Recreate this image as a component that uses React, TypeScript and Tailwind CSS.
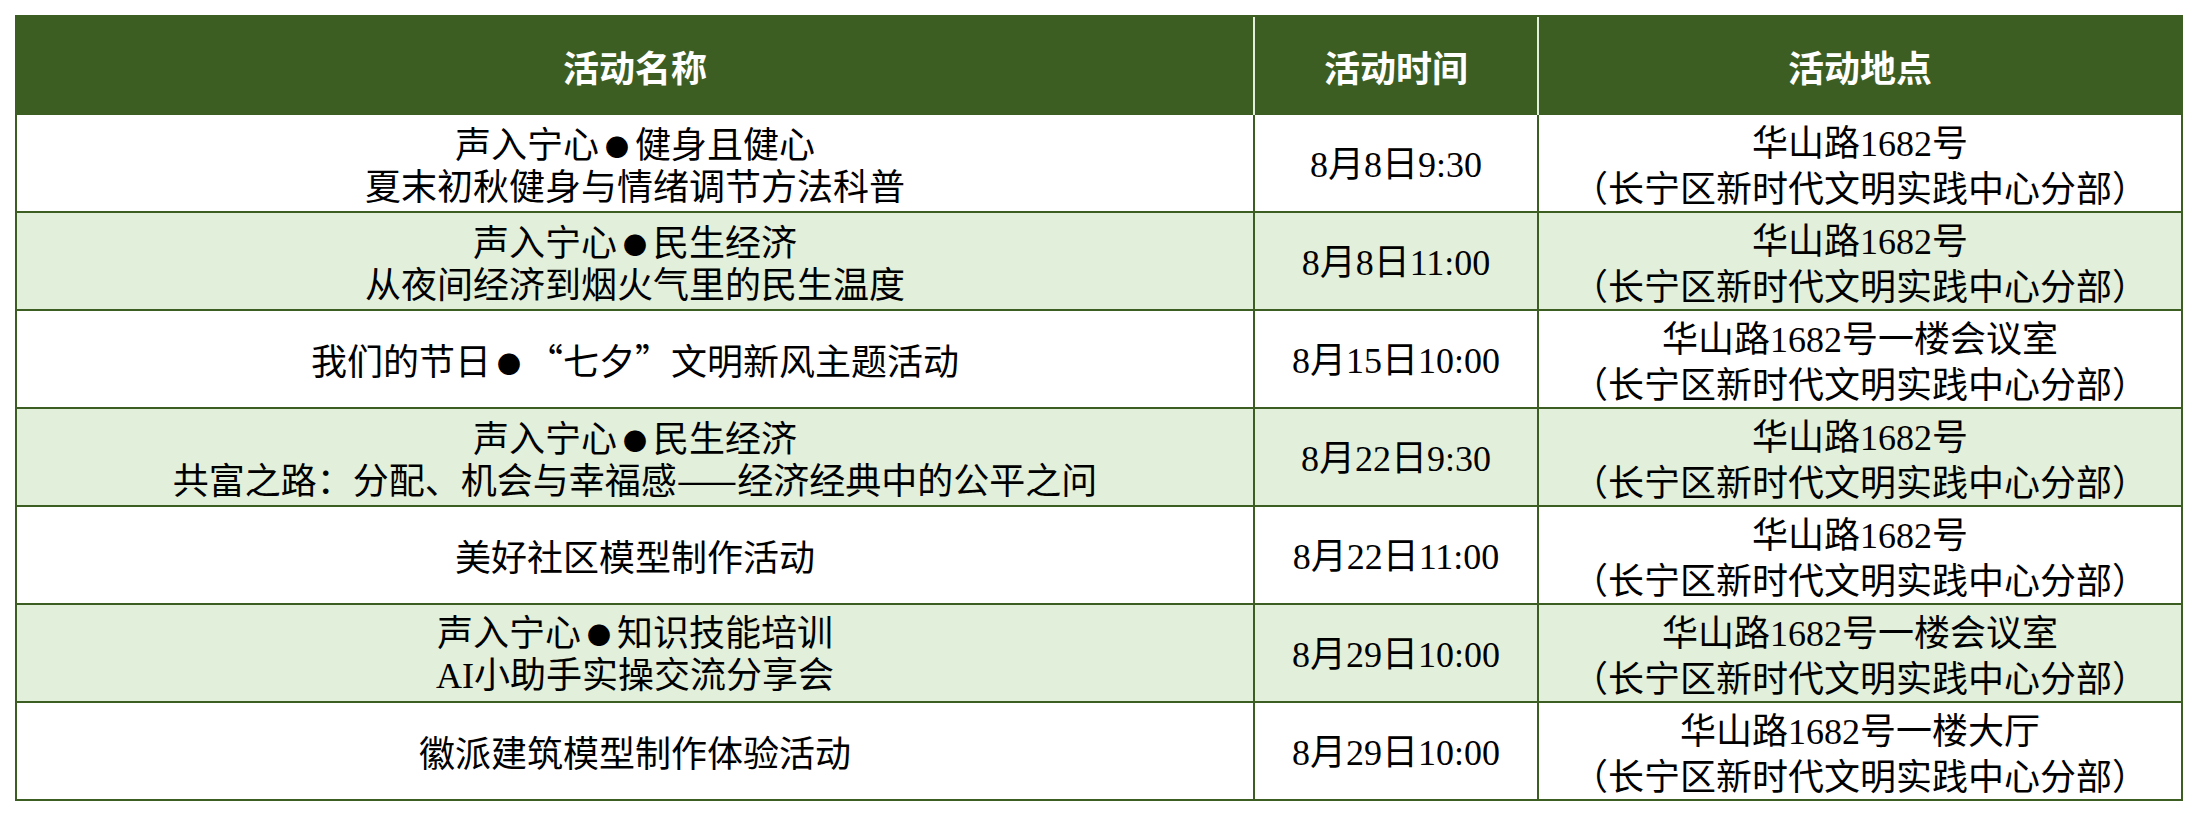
import React from 'react';

interface Activity {
  name: string[];
  time: string;
  place: string[];
}

const HQ = '（长宁区新时代文明实践中心分部）';

const activities: Activity[] = [
  { name: ['声入宁心●健身且健心', '夏末初秋健身与情绪调节方法科普'], time: '8月8日9:30', place: ['华山路1682号', HQ] },
  { name: ['声入宁心●民生经济', '从夜间经济到烟火气里的民生温度'], time: '8月8日11:00', place: ['华山路1682号', HQ] },
  { name: ['我们的节日●“七夕”文明新风主题活动'], time: '8月15日10:00', place: ['华山路1682号一楼会议室', HQ] },
  { name: ['声入宁心●民生经济', '共富之路：分配、机会与幸福感——经济经典中的公平之问'], time: '8月22日9:30', place: ['华山路1682号', HQ] },
  { name: ['美好社区模型制作活动'], time: '8月22日11:00', place: ['华山路1682号', HQ] },
  { name: ['声入宁心●知识技能培训', 'AI小助手实操交流分享会'], time: '8月29日10:00', place: ['华山路1682号一楼会议室', HQ] },
  { name: ['徽派建筑模型制作体验活动'], time: '8月29日10:00', place: ['华山路1682号一楼大厅', HQ] },
];

// latin letters and digits come out in a narrow serif, the bullet smaller, the rest in the CJK face
const Mixed: React.FC<{ text: string }> = ({ text }) => {
  const parts = text.split(/([0-9A-Za-z:]+|●)/).filter((p) => p !== '');
  return (
    <>
      {parts.map((p, i) => {
        if (p === '●')
          return (
            <span key={i} className="inline-block w-[36px] text-center text-[24px] leading-[24px] align-[2px]">
              ●
            </span>
          );
        if (/^[0-9A-Za-z:]+$/.test(p))
          return (
            <span key={i} className="font-['Liberation_Serif',serif]">
              {p}
            </span>
          );
        return <span key={i}>{p}</span>;
      })}
    </>
  );
};

const Lines: React.FC<{ lines: string[] }> = ({ lines }) => (
  <div className="flex flex-col items-center">
    {lines.map((l, i) => (
      <div key={i} className="whitespace-nowrap">
        <Mixed text={l} />
      </div>
    ))}
  </div>
);

export default function App() {
  return (
    <div className="bg-white w-[2198px] h-[816px] pt-[15px] pl-[15px] font-['Noto_Sans_CJK_SC',sans-serif]">
      <div className="w-[2168px] border-2 border-[#3d5e22]">
        <div className="flex h-[98px] bg-[#3d5e22] text-white text-[36px] font-bold">
          <div className="w-[1236px] flex items-center justify-center">活动名称</div>
          <div className="w-[284px] flex items-center justify-center border-l-2 border-[#e2efda]">活动时间</div>
          <div className="w-[644px] flex items-center justify-center border-l-2 border-[#e2efda]">活动地点</div>
        </div>
        {activities.map((a, i) => (
          <div
            key={i}
            className={`flex text-[36px] leading-[42px] text-black ${
              i % 2 === 1 ? 'bg-[#e2efda]' : 'bg-white'
            } ${i < activities.length - 1 ? 'h-[98px] border-b-2 border-[#3d5e22]' : 'h-[96px]'}`}
          >
            <div className="w-[1236px] flex items-center justify-center">
              <Lines lines={a.name} />
            </div>
            <div className="w-[284px] flex items-center justify-center border-l-2 border-[#3d5e22]">
              <Lines lines={[a.time]} />
            </div>
            <div className="w-[644px] flex items-center justify-center border-l-2 border-[#3d5e22]">
              <Lines lines={a.place} />
            </div>
          </div>
        ))}
      </div>
    </div>
  );
}
